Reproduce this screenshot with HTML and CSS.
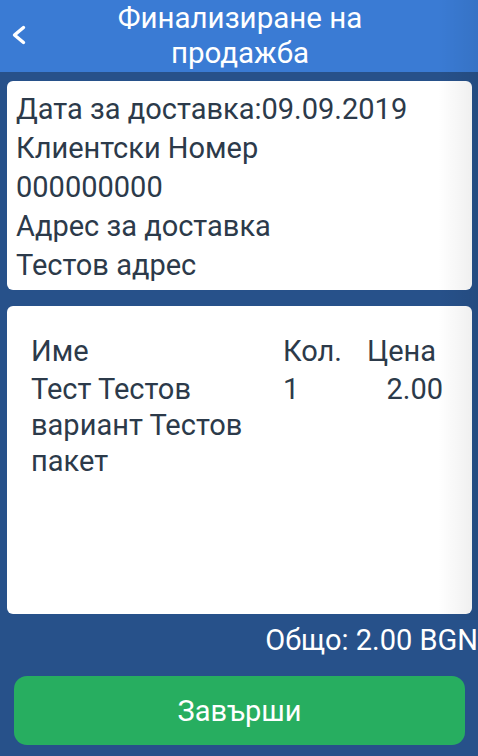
FILE: index.html
```html
<!DOCTYPE html>
<html lang="bg">
<head>
<meta charset="utf-8">
<link rel="stylesheet" href="styles.css">
</head>
<body>
<div class="app">
  <header class="topbar">
    <button class="back" aria-label="Назад">
      <svg width="20" height="22" viewBox="0 0 20 22"><path d="M14.5 3.5 L5.5 11 L14.5 18.5" fill="none" stroke="#fff" stroke-width="3.4" stroke-linecap="round" stroke-linejoin="round"/></svg>
    </button>
    <h1 class="title">Финализиране на<br>продажба</h1>
  </header>
  <main class="content">
    <section class="card info">
      <div>Дата за доставка:09.09.2019</div>
      <div>Клиентски Номер</div>
      <div>000000000</div>
      <div>Адрес за доставка</div>
      <div>Тестов адрес</div>
    </section>
    <section class="card items">
      <div class="row head">
        <div class="c-name">Име</div>
        <div class="c-qty">Кол.</div>
        <div class="c-price">Цена</div>
      </div>
      <div class="row">
        <div class="c-name">Тест Тестов вариант Тестов пакет</div>
        <div class="c-qty">1</div>
        <div class="c-price num">2.00</div>
      </div>
    </section>
    <div class="total">Общо: 2.00 BGN</div>
    <button class="finish">Завърши</button>
  </main>
  <div class="edge-shade"></div>
</div>
</body>
</html>
```
FILE: styles.css
```css
* { box-sizing: border-box; }
html, body { margin: 0; padding: 0; }
body {
  width: 478px;
  height: 756px;
  overflow: hidden;
  background: #27518a;
  font-family: Roboto, "Noto Sans", sans-serif;
}
.app {
  display: flex;
  flex-direction: column;
  height: 756px;
  position: relative;
}
.topbar {
  height: 72px;
  background: #3a7bd4;
  display: flex;
  align-items: center;
  justify-content: center;
  position: relative;
}
.back {
  position: absolute;
  left: 9px;
  top: 23px;
  background: none;
  border: 0;
  padding: 0;
  width: 20px;
  height: 24px;
  display: flex;
  align-items: center;
}
.title {
  margin: 0;
  color: #fff;
  font-weight: 400;
  font-size: 29.5px;
  line-height: 35px;
  text-align: center;
  padding-left: 2px;
}
.content {
  flex: 1;
  display: flex;
  flex-direction: column;
  padding: 9px 6px 0 7px;
}
.card {
  background: #fff;
  border-radius: 6px;
  color: #2c3a4a;
  font-size: 29px;
}
.info {
  height: 209px;
  padding: 9px 9px 0 9px;
  line-height: 39px;
}
.items {
  margin-top: 16px;
  height: 308px;
  padding: 27px 24px 0 24px;
}
.row {
  display: grid;
  grid-template-columns: 252px 84px 76px;
  line-height: 36px;
}
.row.head { margin-bottom: 2px; }
.c-name { padding-right: 10px; }
.num { text-align: right; }
.total {
  color: #fff;
  font-size: 29px;
  text-align: right;
  margin-top: 10px;
  margin-right: -6px;
  line-height: 32px;
  white-space: nowrap;
}
.finish {
  margin: 20px 7px 0 7px;
  height: 69px;
  background: #27ae60;
  color: #fff;
  border: 0;
  border-radius: 13px;
  font-family: Roboto, "Noto Sans", sans-serif;
  font-size: 29px;
  padding: 0;
}
.edge-shade {
  position: absolute;
  top: 0;
  right: 0;
  width: 40px;
  height: 620px;
  pointer-events: none;
  background: linear-gradient(to right, rgba(0,0,0,0), rgba(0,0,0,0.07));
}
```
